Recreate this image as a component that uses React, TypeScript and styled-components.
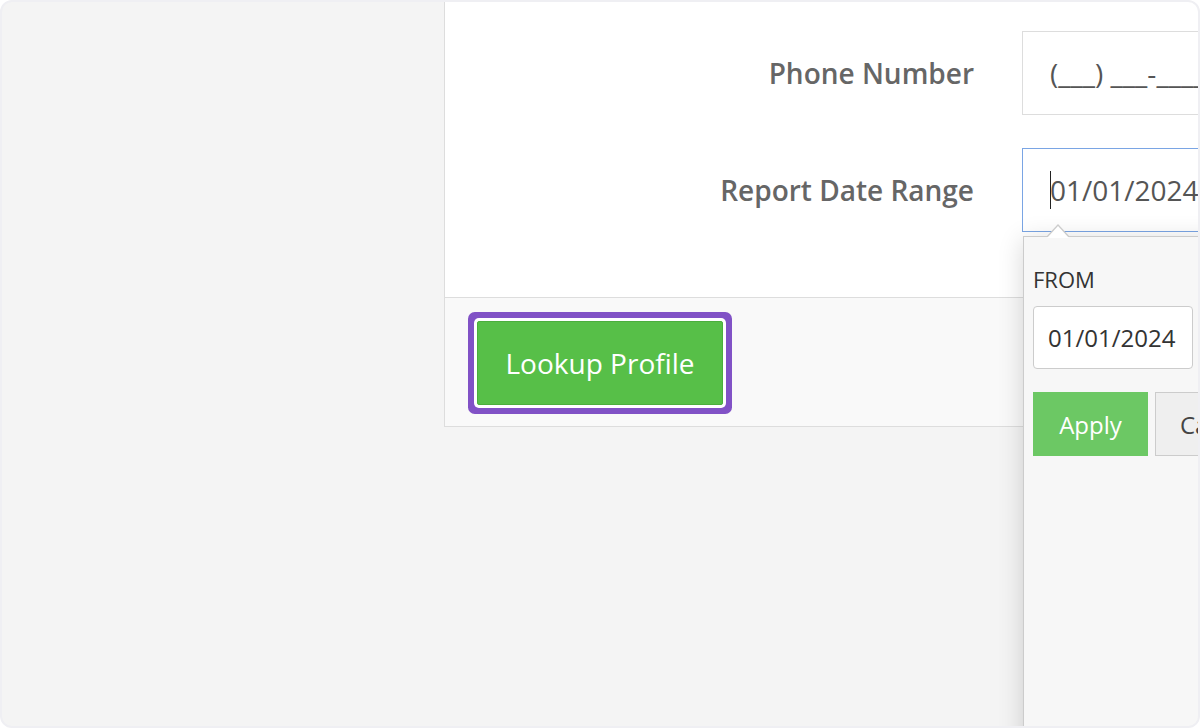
import * as React from 'react';
import styled, { createGlobalStyle } from 'styled-components';

const GlobalStyle = createGlobalStyle`
  html, body {
    margin: 0;
    padding: 0;
    background: #fff;
  }
  body {
    font-family: "Open Sans", "Liberation Sans", sans-serif;
  }
`;

const Frame = styled.div`
  position: relative;
  width: 1200px;
  height: 728px;
  box-sizing: border-box;
  border: 2px solid #efeff3;
  border-radius: 12px;
  overflow: hidden;
  background: #f4f4f4;
  padding-left: 442px;
`;

const Card = styled.div`
  width: 1100px;
  background: #fff;
  border-left: 1px solid #ddd;
  border-bottom: 1px solid #ddd;
`;

const CardBody = styled.div`
  display: flex;
  flex-direction: column;
  gap: 33px;
  padding: 29px 0 65px;
`;

const FormRow = styled.div`
  display: flex;
  align-items: center;
`;

const Label = styled.label`
  flex-shrink: 0;
  width: 577px;
  box-sizing: border-box;
  padding-right: 48px;
  text-align: right;
  font-size: 28px;
  font-weight: 600;
  color: #666;
`;

interface FieldProps {
  focused?: boolean
}

const Field = styled.div<FieldProps>`
  flex-shrink: 0;
  display: flex;
  align-items: center;
  width: 400px;
  height: 84px;
  box-sizing: border-box;
  padding-left: 27px;
  border: 1px solid ${(props) => props.focused ? '#7aa5e4' : '#ddd'};
  font-size: 28px;
  color: #555;
  white-space: nowrap;
`;

const Caret = styled.span`
  display: inline-block;
  width: 1px;
  height: 38px;
  margin-right: -1px;
  background: #222;
`;

const Footer = styled.div`
  border-top: 1px solid #ddd;
  background: #f9f9f9;
  padding: 23px 32px 21px;
`;

const LookupButton = styled.button`
  width: 246px;
  height: 84px;
  border: 1px solid #4bae3d;
  border-radius: 2px;
  background: #57bf48;
  color: #fff;
  font-family: "Open Sans", sans-serif;
  font-size: 28px;
  box-shadow: 0 0 0 3px #fff, 0 0 0 9px #8152c6;
`;

const Popover = styled.div`
  position: absolute;
  left: 1021px;
  top: 234px;
  width: 300px;
  height: 600px;
  box-sizing: border-box;
  padding: 27px 9px 0;
  background: #f7f7f7;
  border: 1px solid #ccc;
  box-shadow: 0 4px 24px rgba(0, 0, 0, 0.16);

  &::before,
  &::after {
    content: '';
    position: absolute;
    left: 22px;
    top: -13px;
    border-left: 12px solid transparent;
    border-right: 12px solid transparent;
    border-bottom: 13px solid #ccc;
  }

  &::after {
    top: -11px;
    left: 23px;
    border-left-width: 11px;
    border-right-width: 11px;
    border-bottom: 12px solid #fff;
  }
`;

const PopLabel = styled.div`
  font-size: 22px;
  line-height: 30px;
  color: #333;
`;

const PopInput = styled.div`
  display: flex;
  align-items: center;
  width: 160px;
  height: 63px;
  margin-top: 12px;
  box-sizing: border-box;
  padding-left: 14px;
  background: #fff;
  border: 1px solid #ccc;
  border-radius: 4px;
  font-size: 24px;
  color: #333;
`;

const PopActions = styled.div`
  display: flex;
  gap: 7px;
  margin-top: 23px;
`;

interface PopButtonProps {
  primary?: boolean
}

const PopButton = styled.button<PopButtonProps>`
  flex-shrink: 0;
  height: 64px;
  padding: 0 24px;
  font-family: "Open Sans", sans-serif;
  font-size: 24px;
  border: 1px solid ${(props) => props.primary ? '#6cc864' : '#ccc'};
  background: ${(props) => props.primary ? '#6cc864' : '#efefef'};
  color: ${(props) => props.primary ? '#fff' : '#444'};
  width: ${(props) => props.primary ? '115px' : 'auto'};
  white-space: nowrap;
`;

export default function App() {
  return (
    <Frame>
      <GlobalStyle />
      <Card>
        <CardBody>
          <FormRow>
            <Label>Phone Number</Label>
            <Field>(___) ___-____</Field>
          </FormRow>
          <FormRow>
            <Label>Report Date Range</Label>
            <Field focused>
              <Caret />
              01/01/2024
            </Field>
          </FormRow>
        </CardBody>
        <Footer>
          <LookupButton>Lookup Profile</LookupButton>
        </Footer>
      </Card>
      <Popover>
        <PopLabel>FROM</PopLabel>
        <PopInput>01/01/2024</PopInput>
        <PopActions>
          <PopButton primary>Apply</PopButton>
          <PopButton>Cancel</PopButton>
        </PopActions>
      </Popover>
    </Frame>
  );
}
